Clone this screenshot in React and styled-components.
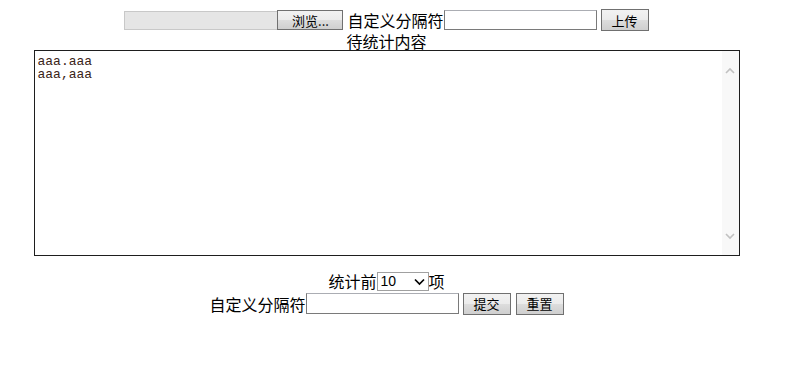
import React from "react";
import styled, { createGlobalStyle } from "styled-components";

const GlobalStyle = createGlobalStyle`
  body {
    margin: 8px;
    background: #fff;
    font-family: "Noto Sans CJK SC", "Liberation Sans", sans-serif;
    font-size: 16px;
    color: #000;
  }
`;

const Page = styled.form`
  width: 757px;
  display: flex;
  flex-direction: column;
  align-items: center;
`;

const Row = styled.div`
  display: flex;
  align-items: center;
  justify-content: center;
  height: ${(p) => p.h}px;
  margin-top: ${(p) => p.mt || 0}px;
`;

const Label = styled.span`
  font-size: 16px;
  line-height: 16px;
  white-space: nowrap;
`;

const FileField = styled.span`
  display: inline-block;
  box-sizing: border-box;
  width: 153px;
  height: 19px;
  background: #e5e5e5;
  border: 1px solid #c8c8c8;
  border-right: none;
`;

const Button = styled.button`
  box-sizing: border-box;
  width: ${(p) => p.w || 48}px;
  height: ${(p) => p.h || 22}px;
  margin-left: ${(p) => p.ml || 0}px;
  margin-right: ${(p) => p.mr || 0}px;
  padding: 0;
  border: 1px solid #707070;
  border-radius: 0;
  background: linear-gradient(#f2f2f2, #ebebeb 50%, #dddddd 50%, #cfcfcf);
  font-family: "Noto Sans CJK SC", sans-serif;
  font-size: 13px;
  line-height: 13px;
  color: #000;
`;

const TextInput = styled.input`
  box-sizing: border-box;
  width: 153px;
  height: ${(p) => p.h || 20}px;
  margin: 0;
  padding: 1px 2px;
  border: 1px solid #7a7a7a;
  border-top-color: #abadb3;
  border-radius: 0;
  background: #fff;
  font-size: 13px;
  outline: none;
`;

const AreaWrap = styled.div`
  position: relative;
  width: 706px;
  height: 206px;
`;

const Area = styled.textarea`
  box-sizing: border-box;
  display: block;
  width: 100%;
  height: 100%;
  margin: 0;
  padding: 4px 20px 2px 3px;
  border: 1px solid #1e1e1e;
  border-radius: 0;
  resize: none;
  overflow: hidden;
  font-family: "Liberation Mono", "Courier New", monospace;
  font-size: 13px;
  line-height: 13px;
  color: #3a2418;
  outline: none;
`;

const Track = styled.div`
  position: absolute;
  top: 1px;
  right: 1px;
  bottom: 1px;
  width: 17px;
  background: #f8f8f8;
  display: flex;
  flex-direction: column;
  justify-content: space-between;
  align-items: center;
  padding: 16px 0 15px;
  box-sizing: border-box;
`;

const SelectWrap = styled.span`
  position: relative;
  display: flex;
  width: 52px;
  height: 19px;
`;

const Select = styled.select`
  appearance: none;
  box-sizing: border-box;
  width: 100%;
  height: 100%;
  margin: 0;
  padding: 0 0 0 3px;
  border: 1px solid #a0a0a0;
  border-radius: 0;
  background: #fff;
  font-family: "Liberation Sans", Arial, sans-serif;
  font-size: 14px;
  color: #000;
  outline: none;
`;

const Arrow = styled.svg`
  position: absolute;
  right: 4px;
  top: 6px;
  pointer-events: none;
`;

const Chevron = ({ up }) => (
  <svg width="10" height="7" viewBox="0 0 10 7">
    <path
      d={up ? "M1 6 L5 2 L9 6" : "M1 1 L5 5 L9 1"}
      fill="none"
      stroke="#c1c1c1"
      strokeWidth="1.6"
    />
  </svg>
);

export default function App() {
  return (
    <>
      <GlobalStyle />
      <Page onSubmit={(e) => e.preventDefault()}>
        <Row h={24}>
          <FileField />
          <Button type="button" w={66} h={20} mr={4}>
            浏览...
          </Button>
          <Label>自定义分隔符</Label>
          <TextInput />
          <Button type="button" ml={4}>
            上传
          </Button>
        </Row>
        <Row h={18}>
          <Label>待统计内容</Label>
        </Row>
        <AreaWrap>
          <Area defaultValue={"aaa.aaa\naaa,aaa"} />
          <Track>
            <Chevron up />
            <Chevron />
          </Track>
        </AreaWrap>
        <Row h={22} mt={14}>
          <Label>统计前</Label>
          <SelectWrap>
            <Select defaultValue="10">
              <option value="10">10</option>
              <option value="20">20</option>
              <option value="50">50</option>
              <option value="100">100</option>
            </Select>
            <Arrow width="11" height="8" viewBox="0 0 11 8">
              <path d="M1 1.5 L5.5 6 L10 1.5" fill="none" stroke="#000" strokeWidth="1.7" />
            </Arrow>
          </SelectWrap>
          <Label>项</Label>
        </Row>
        <Row h={23}>
          <Label>自定义分隔符</Label>
          <TextInput h={21} />
          <Button type="submit" ml={4}>
            提交
          </Button>
          <Button type="reset" ml={5}>
            重置
          </Button>
        </Row>
      </Page>
    </>
  );
}
